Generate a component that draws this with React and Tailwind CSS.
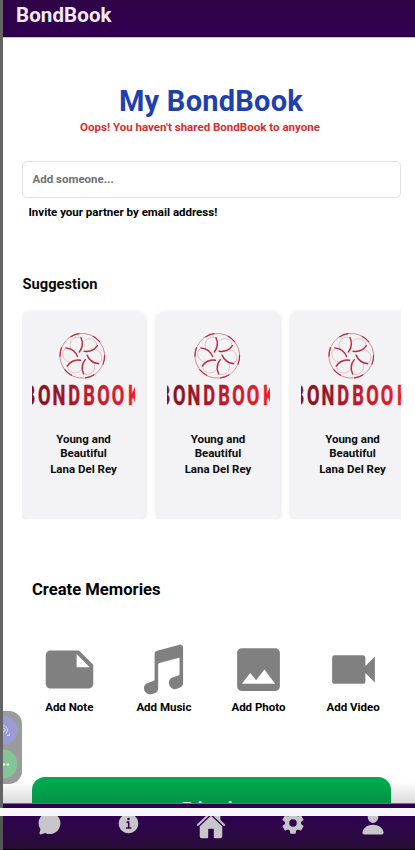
import React from "react";
import { MdNote, MdPhoto, MdVideocam } from "react-icons/md";
import {
  IoMusicalNotes,
  IoChatbubble,
  IoInformationCircle,
  IoHome,
  IoSettingsSharp,
  IoPerson,
} from "react-icons/io5";

const petals = [0, 60, 120, 180, 240, 300];

function Logo({ id }) {
  const fill = `url(#${id})`;
  return (
    <svg width="103" height="76" viewBox="0 0 103 76" className="block shrink-0">
      <defs>
        <linearGradient id={id} gradientUnits="userSpaceOnUse" x1="0" y1="0" x2="158" y2="0">
          <stop offset="0" stopColor="#7d1020" />
          <stop offset="0.5" stopColor="#b51a2a" />
          <stop offset="1" stopColor="#f01c2c" />
        </linearGradient>
      </defs>
      <g transform="translate(50.3 25.8)" fill="none" stroke="#b92c3c" strokeLinecap="round">
        {petals.map((a) => (
          <g key={a} transform={`rotate(${a})`}>
            <path d="M-20.2 -9.4A22.3 22.3 0 0 1 -3.2 -22.1" strokeWidth="0.6" opacity="0.8" />
            <path d="M-11.5 -19.1A22.3 22.3 0 0 1 -3.2 -22.1" strokeWidth="1.2" />
            <path d="M-1.3 -18.2C0.9 -13 0.6 -8 -3 -3.8" strokeWidth="1.4" />
            <path d="M-1.5 -5.5C-1.8 -9 -0.5 -14 3.5 -16.2C8 -18.3 13 -16.5 14.3 -12.5" strokeWidth="0.4" opacity="0.6" />
            <path d="M14.3 -12.5C14.5 -8 11 -4.5 6 -4.2" strokeWidth="0.4" opacity="0.5" />
          </g>
        ))}
      </g>
      <g
        transform="translate(0 74.6) scale(0.65 1)"
        fill={fill}
        stroke={fill}
        strokeWidth="0.5"
        fontFamily="Roboto, sans-serif"
        fontWeight="700"
        fontSize="28"
        textAnchor="middle"
      >
        <text x="-4.3 18.8 41.5 64.8 87.8 110 132.5 156.5" y="0">
          BONDBOOK
        </text>
      </g>
    </svg>
  );
}

function SongCard({ id }) {
  return (
    <div className="flex h-[207px] w-[123px] shrink-0 flex-col items-center rounded-md bg-[#f3f3f6] pt-[18px] shadow-[0_1px_5px_rgba(0,0,0,0.15)]">
      <Logo id={id} />
      <div className="mt-[27px] w-20 text-center text-[11.5px] leading-[13.5px] font-bold text-[#0c0c0d]">
        Young and Beautiful
      </div>
      <div className="mt-[2.5px] text-[11.5px] leading-[13.5px] font-bold text-[#0c0c0d]">Lana Del Rey</div>
    </div>
  );
}

function Memory({ Icon, label }) {
  return (
    <div className="flex w-[94.6px] shrink-0 flex-col items-center">
      <Icon className="h-[57px] w-[57px] text-[#808080]" />
      <span className="mt-0.5 text-[11.5px] leading-[14px] font-bold whitespace-nowrap text-black">{label}</span>
    </div>
  );
}

export default function App() {
  return (
    <div className="flex h-[850px] w-[415px] flex-col overflow-hidden bg-[#f7f7f7] font-['Roboto',sans-serif]">
      <div className="flex h-[808px] shrink-0">
        <div className="w-[3px] shrink-0 bg-[#646464]" />
        <div className="relative flex w-[412px] flex-col overflow-hidden bg-white">
          <header className="h-[37px] shrink-0 border-b border-[#220037] bg-linear-to-b from-[#300346] to-[#300050] pl-[13px] shadow-[0_1px_1px_#dcbde8]">
            <h1 className="pt-[3px] text-[20.5px] leading-6 font-bold tracking-[0.1px] text-[#eeeaf0]">BondBook</h1>
          </header>

          <main className="flex h-[766px] shrink-0 flex-col overflow-hidden">
            <div className="mt-[46px] flex flex-col items-center">
              <h2 className="ml-1 text-[29px] leading-9 font-bold tracking-[0.25px] text-[#1e40af]">My BondBook</h2>
              <p className="mt-px mr-[18px] text-[11.5px] leading-[14px] font-bold tracking-[0.02px] text-[#dc2c2c]">
                Oops! You haven't shared BondBook to anyone
              </p>
            </div>

            <div className="mt-[27px] ml-[19px] flex h-[37px] w-[379px] shrink-0 items-center rounded-[5px] border border-[#e2e2e2] pl-[9.5px] text-[11.5px] font-bold text-[#707070]">
              Add someone...
            </div>
            <p className="mt-[7px] ml-[25.5px] text-[11.5px] leading-[14px] font-bold text-black">
              Invite your partner by email address!
            </p>

            <h3 className="mt-[56px] ml-[19.5px] text-[14.7px] leading-[18px] font-bold text-[#0a0a0a]">Suggestion</h3>
            <div className="mt-[9px] ml-[19px] flex h-[217px] w-[379px] shrink-0 gap-[11.5px] overflow-hidden pt-[10px]">
              <SongCard id="songA" />
              <SongCard id="songB" />
              <SongCard id="songC" />
            </div>

            <h3 className="mt-[60px] ml-[29px] text-[16.6px] leading-[22px] font-bold text-black">Create Memories</h3>
            <div className="mt-[40px] ml-[19px] flex">
              <Memory Icon={MdNote} label="Add Note" />
              <Memory Icon={IoMusicalNotes} label="Add Music" />
              <Memory Icon={MdPhoto} label="Add Photo" />
              <Memory Icon={MdVideocam} label="Add Video" />
            </div>

            <div className="mt-[63px] flex min-h-0 flex-1 bg-linear-to-b from-white from-20% to-[#d9d9d9] pl-[29px]">
              <button className="flex h-[60px] w-[359px] shrink-0 items-start justify-center rounded-[13px] bg-linear-to-b from-[#00a84e] from-10% to-[#047038] pt-5 text-[18px] leading-6 font-bold text-[#dfe9df]">
                Friends
              </button>
            </div>
          </main>
          <div className="h-[5px] shrink-0 border-t border-[#77677f] bg-[#2f0050]" />

          <div className="absolute top-[711px] left-0 h-[73px] w-[19px] overflow-hidden rounded-r-[13px] bg-[#9b9b9b]">
            <svg width="19" height="73" viewBox="0 0 19 73">
              <circle cx="0" cy="19" r="14.5" fill="#9b9cd6" />
              <circle cx="0" cy="53" r="14.5" fill="#83c596" />
              <g fill="none" stroke="#d5d7f2" strokeWidth="1">
                <path d="M0 14.5a4.5 4.5 0 0 1 3 7.8M0 17a2 2 0 0 1 0 4M4 24.5h2.5v-2" />
              </g>
              <circle cx="0.8" cy="53.5" r="1.3" fill="#e9f5ec" />
              <circle cx="4.8" cy="53.5" r="1.3" fill="#e9f5ec" />
            </svg>
          </div>
        </div>
      </div>

      <div className="mt-2 flex h-[34px] shrink-0">
        <div className="w-[3px] shrink-0 bg-[#555]" />
        <nav className="flex w-[412px] justify-between overflow-hidden border-b border-black bg-linear-to-b from-[#2f0050] to-[#290c38] pr-[29px] pl-[33.5px] text-[#c9c6cb]">
          <IoChatbubble className="-mt-[5px] h-[25px] w-[25px]" />
          <IoInformationCircle className="-mt-[5px] h-[25px] w-[25px]" />
          <IoHome className="-mt-[6px] h-[30px] w-[30px]" />
          <IoSettingsSharp className="-mt-[5px] h-6 w-6" />
          <IoPerson className="-mt-[6px] h-[26px] w-[26px]" />
        </nav>
      </div>
    </div>
  );
}
